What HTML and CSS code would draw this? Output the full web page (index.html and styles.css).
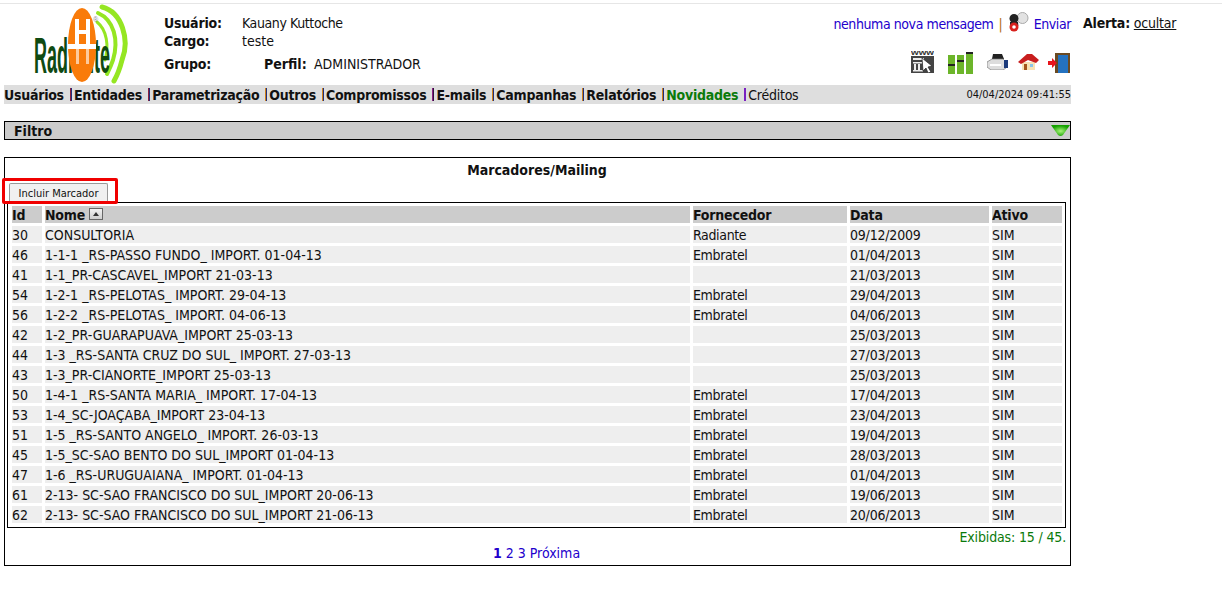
FILE: index.html
```html
<!DOCTYPE html>
<html lang="pt-BR">
<head>
<meta charset="utf-8">
<title>Marcadores/Mailing</title>
<link rel="stylesheet" href="styles.css">
</head>
<body>
<div class="page">
  <header class="head">
    <div class="logo">
      <svg width="104" height="82" viewBox="0 0 104 82">
        <g fill="none" stroke="#95e622" stroke-linecap="round">
          <path d="M72 3C92 8 100 36 92 56C90 64 88 70 84 77" stroke-width="5"/>
          <path d="M68 9C84 16 89 36 83 56C81 62 79 66 77 70" stroke-width="4"/>
          <path d="M67 18C77 26 79 42 75 56" stroke-width="3"/>
        </g>
        <text class="logo-word" transform="translate(4 69) scale(.36 1)">Radiante</text>
        <ellipse cx="52" cy="41" rx="14" ry="37" fill="#f97b0a"/>
        <path d="M45 15h4v11h7V15h4v25h-4V30h-7v10h-4z" fill="#fff"/>
        <rect x="38" y="40" width="28" height="5" fill="#fff"/>
        <path d="M46 45h3v15h-3zM56 45h3v15h-3z" fill="#fff" opacity=".6"/>
        <text class="logo-reg" x="63" y="18">®</text>
      </svg>
    </div>
    <div class="user">
      <div class="user-row"><b class="ulabel">Usuário:</b><span class="uname">Kauany Kuttoche</span></div>
      <div class="user-row"><b class="ulabel">Cargo:</b><span>teste</span></div>
      <div class="user-row group-row"><b class="ulabel">Grupo:</b><b class="plabel">Perfil:</b><span>ADMINISTRADOR</span></div>
    </div>
    <div class="tools">
      <div class="msg">
        <a class="link tight" href="#">nenhuma nova mensagem</a>
        <span class="sep">|</span>
        <svg class="msg-icon" width="21" height="20" viewBox="0 0 21 20">
          <circle cx="14.500" cy="6" r="5.500" fill="#e2e2e2" stroke="#aaa"/>
          <path d="M10 10l-2 3 3 1z" fill="#aaa"/>
          <circle cx="6" cy="6.500" r="4.500" fill="#222"/>
          <path d="M2 10h8v3H2z" fill="#222"/>
          <circle cx="6" cy="15" r="4.500" fill="#d8201c"/>
          <circle cx="6" cy="15" r="1.800" fill="#fff"/>
        </svg>
        <a class="link tight" href="#">Enviar</a>
      </div>
      <div class="icons">
        <svg class="ic-www" width="23" height="23" viewBox="0 0 23 23">
          <text class="www" x="0" y="5" textLength="23" lengthAdjust="spacingAndGlyphs">www</text>
          <rect x="0" y="6" width="23" height="17" fill="#444"/>
          <path d="M2 8h11v2H2zM2 12h9v1.500H2zM3 14h2v6H3zM7 14h2v6H7zM2 20h10v1.500H2z" fill="#eee"/>
          <path d="M11 8l10 8-4 1 3 5-3 1-2-5-3 3z" fill="#fff" stroke="#222" stroke-width=".7"/>
        </svg>
        <svg class="ic-bars" width="25" height="22" viewBox="0 0 25 22">
          <path d="M0 3h7v19H0zM9 3h7v19H9zM18 0h7v22h-7z" fill="#6cb52a"/>
          <path d="M0 12h7v2H0zM9 8h7v2H9zM18 0h7v2h-7z" fill="#222"/>
        </svg>
        <svg class="ic-print" width="21" height="16" viewBox="0 0 21 16">
          <path d="M6 0h9l2 5H5z" fill="#222"/>
          <path d="M0 8l5-3h11l3 3v6l-3 2H4l-4-3z" fill="#ddd" stroke="#777" stroke-width=".7"/>
          <path d="M17 6h4v8h-4z" fill="#1b3a7a"/>
          <path d="M3 10h11v2H3z" fill="#fff"/>
        </svg>
        <svg class="ic-home" width="21" height="16" viewBox="0 0 21 16">
          <path d="M4 8h13v8H4z" fill="#f7e3b5"/>
          <path d="M0 8L9 0h5l7 6-3 3-8-3-7 4z" fill="#c81e1e"/>
          <path d="M6 10h3v6H6z" fill="#a3551c"/>
          <path d="M12 10h3v3h-3z" fill="#8ac6e8"/>
        </svg>
        <svg class="ic-door" width="22" height="20" viewBox="0 0 22 20">
          <path d="M7 0h15v20H7z" fill="#6b4a22"/>
          <path d="M10 2h10v18H10z" fill="#2472c0"/>
          <path d="M0 8h4V5l5 5-5 5v-3H0z" fill="#e8141c"/>
        </svg>
      </div>
    </div>
    <div class="alert"><b>Alerta:</b> <a class="plain" href="#">ocultar</a></div>
  </header>

  <nav class="nav">
    <div class="nav-items">
      <b>Usuários</b><i class="bar b1"></i><b>Entidades</b><i class="bar b2"></i><b>Parametrização</b><i class="bar b3"></i><b>Outros</b><i class="bar b3"></i><b>Compromissos</b><i class="bar b4"></i><b>E-mails</b><i class="bar b3"></i><b>Campanhas</b><i class="bar b3"></i><b>Relatórios</b><i class="bar b3"></i><b class="new">Novidades</b><i class="bar b5"></i><span>Créditos</span>
    </div>
    <div class="clock">04/04/2024 09:41:55</div>
  </nav>

  <section class="filter">
    <b>Filtro</b>
    <svg width="19" height="11" viewBox="0 0 19 11">
      <defs><radialGradient id="g" cx=".5" cy=".55" r=".5"><stop offset="0" stop-color="#a8f47a"/><stop offset="1" stop-color="#14a000"/></radialGradient></defs>
      <path d="M0 0h19L12 10Q9.500 12 7 10Z" fill="url(#g)"/>
    </svg>
  </section>

  <main class="panel">
    <h1 class="title">Marcadores/Mailing</h1>
    <div class="action">
      <button class="btn" type="button">Incluir Marcador</button>
      <span class="mark"></span>
    </div>
    <div class="grid-box">
      <table class="grid">
        <colgroup><col class="c1"><col class="c2"><col class="c3"><col class="c4"><col class="c5"></colgroup>
        <thead>
          <tr><th>Id</th><th>Nome <span class="sort"></span></th><th>Fornecedor</th><th>Data</th><th>Ativo</th></tr>
        </thead>
        <tbody>
          <tr><td>30</td><td>CONSULTORIA</td><td>Radiante</td><td>09/12/2009</td><td>SIM</td></tr>
          <tr><td>46</td><td>1-1-1 _RS-PASSO FUNDO_ IMPORT. 01-04-13</td><td>Embratel</td><td>01/04/2013</td><td>SIM</td></tr>
          <tr><td>41</td><td>1-1_PR-CASCAVEL_IMPORT 21-03-13</td><td></td><td>21/03/2013</td><td>SIM</td></tr>
          <tr><td>54</td><td>1-2-1 _RS-PELOTAS_ IMPORT. 29-04-13</td><td>Embratel</td><td>29/04/2013</td><td>SIM</td></tr>
          <tr><td>56</td><td>1-2-2 _RS-PELOTAS_ IMPORT. 04-06-13</td><td>Embratel</td><td>04/06/2013</td><td>SIM</td></tr>
          <tr><td>42</td><td>1-2_PR-GUARAPUAVA_IMPORT 25-03-13</td><td></td><td>25/03/2013</td><td>SIM</td></tr>
          <tr><td>44</td><td>1-3 _RS-SANTA CRUZ DO SUL_ IMPORT. 27-03-13</td><td></td><td>27/03/2013</td><td>SIM</td></tr>
          <tr><td>43</td><td>1-3_PR-CIANORTE_IMPORT 25-03-13</td><td></td><td>25/03/2013</td><td>SIM</td></tr>
          <tr><td>50</td><td>1-4-1 _RS-SANTA MARIA_ IMPORT. 17-04-13</td><td>Embratel</td><td>17/04/2013</td><td>SIM</td></tr>
          <tr><td>53</td><td>1-4_SC-JOAÇABA_IMPORT 23-04-13</td><td>Embratel</td><td>23/04/2013</td><td>SIM</td></tr>
          <tr><td>51</td><td>1-5 _RS-SANTO ANGELO_ IMPORT. 26-03-13</td><td>Embratel</td><td>19/04/2013</td><td>SIM</td></tr>
          <tr><td>45</td><td>1-5_SC-SAO BENTO DO SUL_IMPORT 01-04-13</td><td>Embratel</td><td>28/03/2013</td><td>SIM</td></tr>
          <tr><td>47</td><td>1-6 _RS-URUGUAIANA_ IMPORT. 01-04-13</td><td>Embratel</td><td>01/04/2013</td><td>SIM</td></tr>
          <tr><td>61</td><td>2-13- SC-SAO FRANCISCO DO SUL_IMPORT 20-06-13</td><td>Embratel</td><td>19/06/2013</td><td>SIM</td></tr>
          <tr><td>62</td><td>2-13- SC-SAO FRANCISCO DO SUL_IMPORT 21-06-13</td><td>Embratel</td><td>20/06/2013</td><td>SIM</td></tr>
        </tbody>
      </table>
    </div>
    <div class="count">Exibidas: 15 / 45.</div>
    <div class="pager"><a class="link" href="#"><b>1</b></a> <a class="link" href="#">2</a> <a class="link" href="#">3</a> <a class="link" href="#">Próxima</a></div>
  </main>
</div>
</body>
</html>
```

FILE: styles.css
```css
* { box-sizing: border-box; }
html, body { margin: 0; padding: 0; background: #fff; }
body {
  font-family: "DejaVu Sans Condensed", "DejaVu Sans", sans-serif;
  font-size: 14px;
  color: #111;
}
.page { width: 1222px; padding-top: 3px; }
.head {
  display: flex;
  height: 82px;
  border-top: 1px solid #e6e6e6;
}
.logo { width: 164px; padding-left: 30px; }
.logo svg { display: block; }
.logo-word {
  font-family: "Liberation Sans", sans-serif;
  font-weight: 700;
  font-size: 50px;
  fill: #0f4a12;
}
.logo-reg { font-family: "Liberation Sans", sans-serif; font-size: 7px; fill: #889; }
.user { width: 656px; padding-top: 10px; }
.user-row { display: flex; height: 18px; line-height: 18px; }
.group-row { margin-top: 5px; }
.ulabel { width: 78px; letter-spacing: -.2px; }
.uname { letter-spacing: -.4px; }
.plabel { width: 50px; margin-left: 22px; }
.tools { width: 251px; display: flex; flex-direction: column; align-items: flex-end; padding-top: 9px; }
.msg { display: flex; align-items: center; gap: 5px; height: 22px; }
.sep { color: #b06a10; }
.msg-icon { margin: -5px 0 0 0; }
.link { color: #2200cc; text-decoration: none; }
.tight { letter-spacing: -.42px; }
.plain { color: #111; text-decoration: underline; }
.icons { display: flex; align-items: flex-end; margin-top: 15px; height: 24px; }
.www { font-family: "Liberation Sans", sans-serif; font-size: 7px; font-weight: 700; fill: #333; }
.ic-www { margin-right: 14px; margin-bottom: 1px; }
.ic-bars { margin-right: 14px; }
.ic-print { margin-right: 10px; margin-bottom: 4px; }
.ic-home { margin-right: 9px; margin-bottom: 4px; }
.ic-door { margin-bottom: 1px; margin-right: 1px; }
.alert { margin-left: 12px; padding-top: 10px; line-height: 18px; letter-spacing: -.2px; }

.nav {
  margin-left: 4px;
  width: 1067px;
  height: 19px;
  background: #dedede;
  display: flex;
  justify-content: space-between;
  align-items: center;
}
.nav-items { display: flex; align-items: center; white-space: nowrap; letter-spacing: -.25px; }
.bar { width: 2px; height: 13px; margin: 0 2px 0 6px; }
.b1 { background: linear-gradient(90deg, #8a2040 50%, #23307a 50%); }
.b2 { background: linear-gradient(90deg, #8a2040 50%, #23307a 50%); }
.b3 { background: linear-gradient(90deg, #d08018 50%, #23307a 50%); }
.b4 { background: linear-gradient(90deg, #8a2080 50%, #301040 50%); }
.b5 { background: #7a20c0; }
.new { color: #0a7a0a; }
.clock { font-size: 11px; }

.filter {
  margin: 17px 0 0 4px;
  width: 1067px;
  height: 19px;
  background: #cccccc;
  border: 1px solid #000;
  display: flex;
  justify-content: space-between;
  align-items: center;
  padding: 0 0 0 9px;
}

.panel {
  margin: 17px 0 0 4px;
  width: 1067px;
  height: 409px;
  border: 1px solid #000;
  padding: 0 4px 0 2px;
}
.title { margin: 0 0 0 1px; height: 25px; line-height: 24px; font-size: 14px; text-align: center; }
.action { position: relative; height: 19px; padding-left: 2px; }
.btn {
  display: block;
  width: 99px;
  height: 18px;
  padding: 1px 0 0;
  font: 11px "DejaVu Sans Condensed", "DejaVu Sans", sans-serif;
  color: #111;
  background: #f0f0f0;
  border: 1px solid #999;
  border-bottom: 0;
  border-radius: 2px 2px 0 0;
}
.mark {
  position: absolute;
  left: -5px;
  top: -5px;
  width: 116px;
  height: 26px;
  border: 3px solid #f00000;
  border-radius: 2px;
}
.grid-box { border: 1px solid #000; height: 326px; padding: 0 1px; }
.grid { border-collapse: separate; border-spacing: 3px; table-layout: fixed; width: 1056px; }
.c1 { width: 30px; }
.c2 { width: 645px; }
.c3 { width: 154px; }
.c4 { width: 139px; }
.c5 { width: 70px; }
.grid th, .grid td { height: 17px; padding: 1px 0 0; line-height: 16px; text-align: left; white-space: nowrap; overflow: hidden; }
.grid th { background: #cccccc; letter-spacing: -.2px; }
.grid td { background: #eeeeee; }
.grid td:nth-child(3) { letter-spacing: -.35px; }
.grid td:nth-child(4) { letter-spacing: -.2px; }
.sort {
  display: inline-block;
  width: 14px;
  height: 12px;
  margin-left: 0;
  vertical-align: 0;
  border: 1px solid #666;
  background: linear-gradient(#f2f2f2, #cfcfcf);
  position: relative;
}
.sort::after {
  content: "";
  position: absolute;
  left: 3px;
  top: 3px;
  border: 3.500px solid transparent;
  border-top: 0;
  border-bottom: 4px solid #333;
}
.count { text-align: right; color: #0a7a0a; height: 16px; line-height: 18px; letter-spacing: -.15px; }
.pager { text-align: center; line-height: 18px; }
```
